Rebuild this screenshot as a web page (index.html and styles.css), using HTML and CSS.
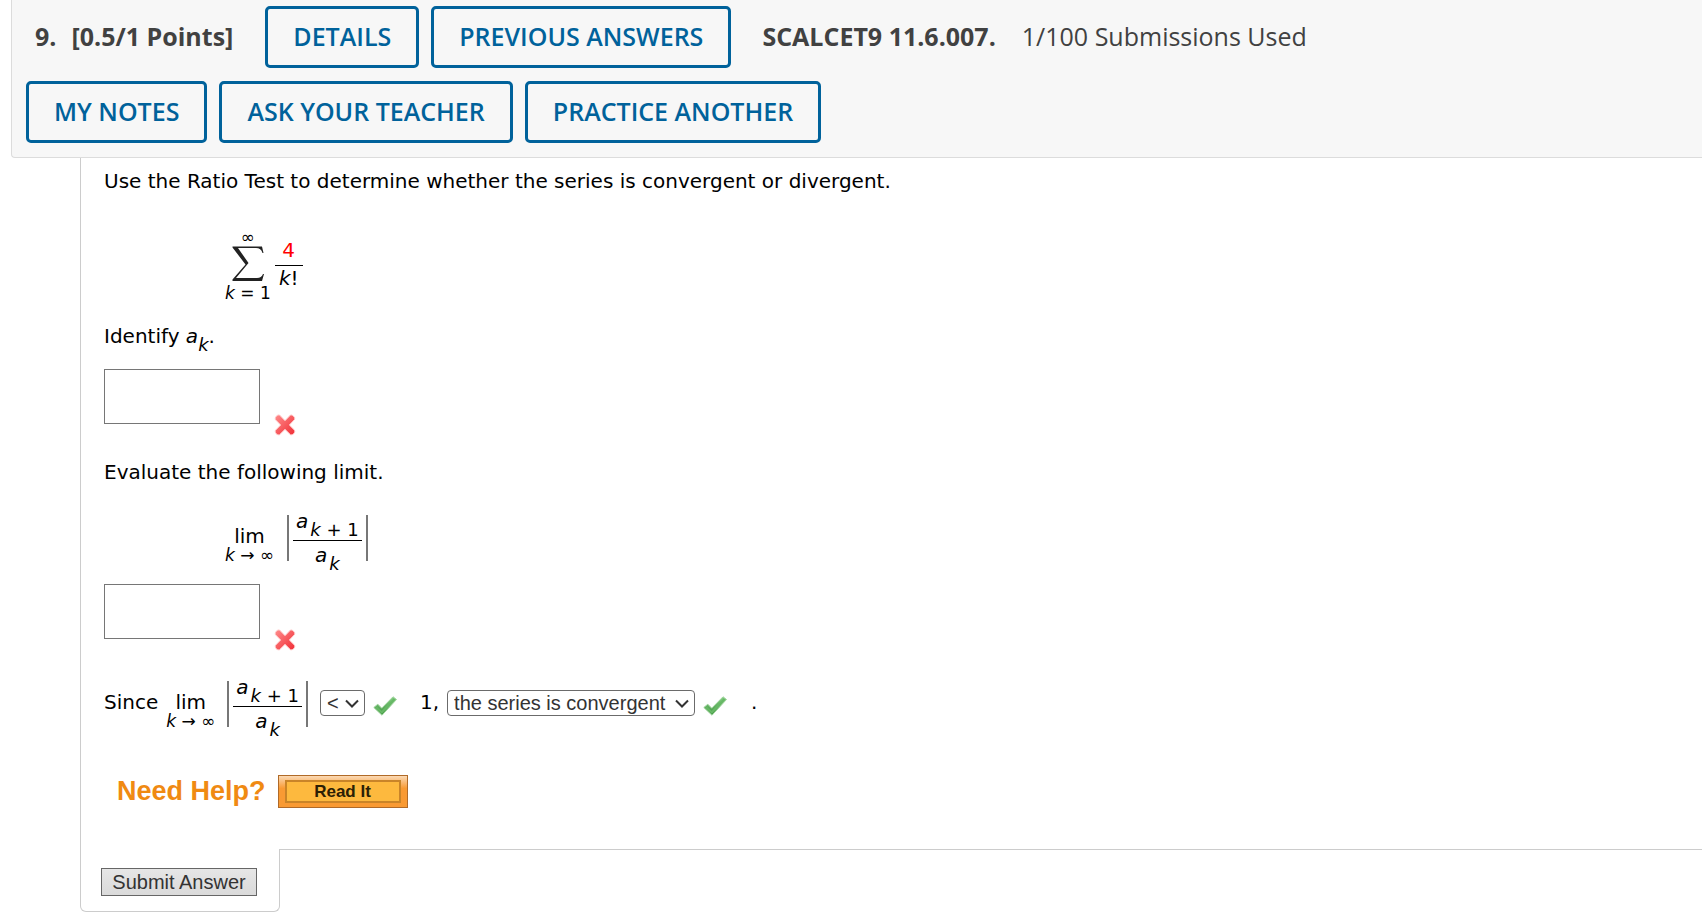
FILE: index.html
```html
<!DOCTYPE html>
<html lang="en">
<head>
<meta charset="utf-8">
<title>Question 9</title>
<link rel="stylesheet" href="styles.css">
</head>
<body>
<svg class="defs" aria-hidden="true">
  <defs>
    <linearGradient id="red" x1="0" y1="0" x2="1" y2="1"><stop offset="0" stop-color="#ff8c8c"/><stop offset="1" stop-color="#f02c34"/></linearGradient>
    <linearGradient id="green" x1="0" y1="0" x2="0" y2="1"><stop offset="0" stop-color="#86cf84"/><stop offset="1" stop-color="#3f9440"/></linearGradient>
    <symbol id="cross" viewBox="0 0 22 22">
      <path d="M5.5 1 11 6.700 16.500 1Q18 .5 19.500 2.200 21.500 4 20.500 5.500L15.300 11 20.500 16.200Q21.500 18 19.800 19.600 18 21.500 16.500 20.700L11 15.300 5.500 20.700Q4 21.500 2.200 19.700.5 18 1.500 16.300L6.700 11 1.500 5.700Q.5 4 2.300 2.200 4 .5 5.500 1Z" fill="url(#red)" stroke="#ffc4c4" stroke-width="1"/>
    </symbol>
    <symbol id="check" viewBox="0 0 24 20">
      <path d="M.8 11.500 4.800 8.200 8.700 12.200 20 .8 23.500 3.500 9 19.200Z" fill="url(#green)" stroke="#9fd39d" stroke-width="1" stroke-linejoin="round"/>
      <path d="M3 11.200 8.800 16.300 21.500 3" fill="none" stroke="#67b866" stroke-width="2"/>
    </symbol>
  </defs>
</svg>
<header class="bar">
  <div class="bar-row">
    <h2 class="points"><span>9.</span><span>[0.5/1 Points]</span></h2>
    <button class="action" type="button">DETAILS</button>
    <button class="action" type="button">PREVIOUS ANSWERS</button>
    <p class="source"><strong>SCALCET9 11.6.007.</strong><span>1/100 Submissions Used</span></p>
  </div>
  <div class="bar-row">
    <button class="action" type="button">MY NOTES</button>
    <button class="action" type="button">ASK YOUR TEACHER</button>
    <button class="action" type="button">PRACTICE ANOTHER</button>
  </div>
</header>
<main class="question">
  <p class="line">Use the Ratio Test to determine whether the series is convergent or divergent.</p>
  <div class="math series">
    <span class="sum">
      <span class="small">∞</span>
      <svg class="sigma" viewBox="0 0 32 35" role="img" aria-label="sum"><path d="M.5.5H30L31.500 7H30.500Q29 2 24 2H6L16.500 17 4 32H25Q29.500 32 31 28H32L30 35H.5V33.500L13.500 18.500.5 1.500Z" fill="#222"/></svg>
      <span class="small"><i>k</i> = 1</span>
    </span>
    <span class="frac simple"><span class="num red">4</span><span class="den"><i>k</i>!</span></span>
  </div>
  <p class="line identify"><label for="ak">Identify <i>a</i><i class="sub">k</i>.</label></p>
  <div class="answer"><input id="ak" type="text"><svg class="cross" role="img" aria-label="incorrect"><use href="#cross"/></svg></div>
  <p class="line evaluate"><label for="limit">Evaluate the following limit.</label></p>
  <div class="math limit">
    <span class="lim"><span>lim</span><span class="small"><i>k</i> → ∞</span></span>
    <span class="abs"><span class="frac"><span class="num"><i>a</i><span class="low"><i>k</i> + 1</span></span><span class="den"><i>a</i><span class="low"><i>k</i></span></span></span></span>
  </div>
  <div class="answer"><input id="limit" type="text"><svg class="cross" role="img" aria-label="incorrect"><use href="#cross"/></svg></div>
  <div class="math since">
    <span class="word">Since</span>
    <span class="lim"><span>lim</span><span class="small"><i>k</i> → ∞</span></span>
    <span class="abs"><span class="frac"><span class="num"><i>a</i><span class="low"><i>k</i> + 1</span></span><span class="den"><i>a</i><span class="low"><i>k</i></span></span></span></span>
    <span class="pick"><select class="compare" aria-label="Comparison"><option>&lt;</option><option>&gt;</option><option>=</option></select><svg class="chev" viewBox="0 0 14 9"><path d="M1 1.500 7 7.500 13 1.500"/></svg></span>
    <svg class="check" role="img" aria-label="correct"><use href="#check"/></svg>
    <span class="one">1,</span>
    <span class="pick"><select class="result" aria-label="Conclusion"><option>the series is convergent</option><option>the series is divergent</option></select><svg class="chev" viewBox="0 0 14 9"><path d="M1 1.500 7 7.500 13 1.500"/></svg></span>
    <svg class="check" role="img" aria-label="correct"><use href="#check"/></svg>
    <span class="stop">.</span>
  </div>
  <div class="help"><strong>Need Help?</strong><button class="read" type="button"><span>Read It</span></button></div>
</main>
<footer class="foot">
  <div class="tab"><button class="submit" type="submit">Submit Answer</button></div>
  <div class="rule"></div>
</footer>
</body>
</html>
```
FILE: styles.css
```css
* { box-sizing: border-box; }
body { margin: 0; background: #fff; color: #000; font: 20px/26px Verdana, "DejaVu Sans", sans-serif; overflow-x: hidden; }
p, h2 { margin: 0; }
.defs { position: absolute; width: 0; height: 0; }

.bar { margin-left: 11px; padding: 6px 14px 14px; display: flex; flex-direction: column; gap: 13px; background: #f7f7f7; border: solid #dcdcdc; border-width: 0 0 1px 1px; border-bottom-left-radius: 4px; font-family: "Open Sans", sans-serif; color: #414141; }
.bar-row { display: flex; align-items: center; gap: 12px; }
.points { display: flex; gap: 15px; margin: 0 20px 0 9px; padding-bottom: 2px; font-size: 25px; line-height: 34px; font-weight: 700; }
.action { height: 62px; padding: 0 25px 2px; border: 3px solid #00629b; border-radius: 5px; background: #f7f7f7; color: #00629b; font: 600 25px/34px "Open Sans", sans-serif; white-space: nowrap; }
.source { display: flex; gap: 26px; margin-left: 19px; padding-bottom: 2px; font-size: 25px; line-height: 34px; white-space: nowrap; }

.question { margin-left: 80px; padding: 10px 0 41px 23px; border-left: 1px solid #ccc; }
.math { display: flex; align-items: flex-start; }
.small { font-size: 17px; line-height: 20px; }
.series { margin: 33px 0 20px 121px; gap: 4px; }
.sum { display: flex; flex-direction: column; align-items: center; }
.sigma { width: 32px; height: 35px; margin: -1px 0 2px; }
.frac { display: flex; flex-direction: column; align-items: stretch; text-align: center; }
.num { border-bottom: 1px solid #000; }
.simple { margin-top: 10px; width: 28px; }
.simple .num { padding-bottom: 2px; }
.simple .den { line-height: 24px; }
.red { color: #f00; }
.sub { position: relative; top: 8px; font-size: 18px; line-height: 1; }

.answer { display: flex; align-items: flex-end; gap: 14px; }
.answer input { width: 156px; height: 55px; margin-bottom: 12px; border: 1px solid #767676; padding: 0 8px; font: inherit; }
.cross { width: 22px; height: 22px; }
.identify { margin-bottom: 20px; }
.evaluate { margin: 23px 0 30px; }

.limit { margin: 0 0 13px 121px; gap: 13px; }
.lim { display: flex; flex-direction: column; align-items: center; padding-top: 10px; line-height: 22px; }
.lim .small { line-height: 16px; }
.abs { position: relative; padding: 0 6px; }
.abs::before, .abs::after { content: ""; position: absolute; top: 0; width: 2px; height: 46px; background: #777; }
.abs::before { left: 0; }
.abs::after { right: 0; }
.abs .num { height: 26px; padding: 0 3px; }
.abs .num, .abs .den { display: flex; justify-content: center; line-height: 12px; gap: 2px; }
.abs .den { padding-top: 8px; height: 30px; }
.low { padding-top: 9px; font-size: 18px; }

.since { margin-top: 30px; align-items: flex-start; }
.word { margin: 8px 8px 0 0; }
.since .abs { margin-left: 12px; }
.pick { position: relative; margin: 9px 0 0 12px; display: flex; }
.pick select { appearance: none; height: 26px; border: 1px solid #6b6b6b; border-radius: 4px; background: #fff; color: #333; padding: 0 6px; font: 20px/24px "Liberation Sans", Arial, sans-serif; }
.compare { width: 45px; }
.result { width: 248px; }
.chev { position: absolute; right: 6px; top: 9px; width: 14px; height: 9px; fill: none; stroke: #333; stroke-width: 2; pointer-events: none; }
.check { width: 24px; height: 20px; margin: 15px 0 0 8px; }
.one { margin: 8px 0 0 23px; }
.one + .pick { margin-left: 8px; }
.stop { margin: 8px 0 0 24px; }

.help { display: flex; align-items: center; gap: 12px; margin: 38px 0 0 13px; font-family: "Liberation Sans", Arial, sans-serif; }
.help strong { color: #f08a12; font-size: 27px; line-height: 33px; }
.read { width: 130px; height: 33px; padding: 4px 6px; border: 1px solid #b06a28; background: linear-gradient(#fbd9b4, #f99a33 40%, #f99a33); font: bold 17px/20px "Liberation Sans", Arial, sans-serif; color: #2b2005; }
.read span { display: block; height: 23px; border: 2px solid #c98428; background: #fdb93e; }

.foot { display: flex; margin-left: 80px; }
.tab { width: 200px; padding: 19px 20px; border: 1px solid #ccc; border-top: 0; border-radius: 0 0 6px 6px; height: 63px; }
.rule { flex: 1; border-top: 1px solid #ccc; }
.submit { width: 156px; height: 28px; padding: 0; border: 1px solid #666; background: linear-gradient(#e6e6e6, #dadada); color: #333; font: 20px/24px "Liberation Sans", Arial, sans-serif; white-space: nowrap; }
```
